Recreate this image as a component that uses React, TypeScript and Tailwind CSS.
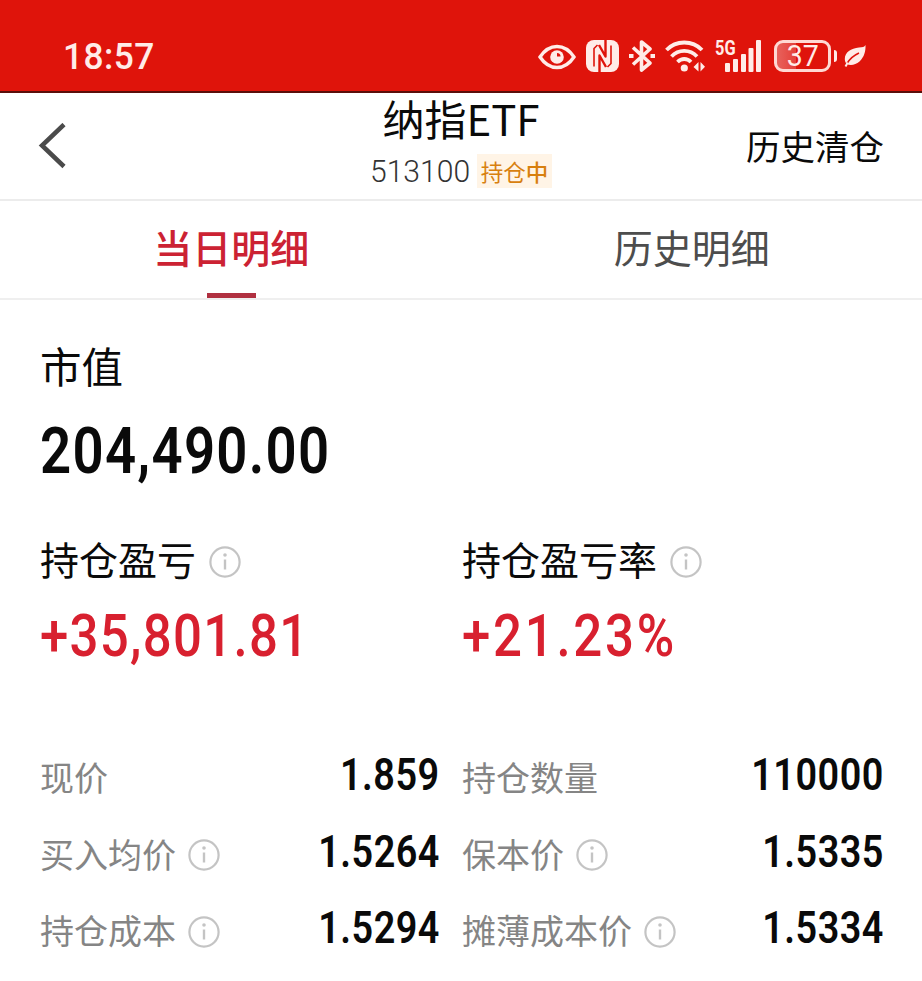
import { clsx } from 'clsx'

const summary = [
  { label: '持仓盈亏', value: '+35,801.81', tracking: 'tracking-[1.5px]' },
  { label: '持仓盈亏率', value: '+21.23%', tracking: 'tracking-[3.2px]' },
]

const details = [
  { label: '现价', value: '1.859', info: false },
  { label: '持仓数量', value: '110000', info: false },
  { label: '买入均价', value: '1.5264', info: true },
  { label: '保本价', value: '1.5335', info: true },
  { label: '持仓成本', value: '1.5294', info: true },
  { label: '摊薄成本价', value: '1.5334', info: true },
]

function InfoIcon() {
  return (
    <svg className="shrink-0 text-[#c4c4c4]" width="32" height="32" viewBox="0 0 32 32" fill="none" stroke="currentColor" strokeWidth="2.2">
      <circle cx="16" cy="16" r="14.6" />
      <path d="M16 13.5v10" strokeWidth="2.4" />
      <circle cx="16" cy="9" r="1.8" fill="currentColor" stroke="none" />
    </svg>
  )
}

function StatusIcons() {
  return (
    <div className="flex items-center text-[#ffece8]">
      <svg width="38" height="32" viewBox="0 0 38 32" fill="none">
        <path d="M2 17C7 9.500 12.500 6.500 19 6.500S31 9.500 36 17C31 24.500 25.500 27.500 19 27.500S7 24.500 2 17Z" stroke="currentColor" strokeWidth="3.400" />
        <circle cx="19" cy="17" r="6.800" fill="currentColor" />
        <path d="M19 16.500v-3.600a3.800 3.800 0 0 1 3.600 3.600Z" fill="#df140b" />
      </svg>
      <svg className="ml-[10px]" width="33" height="32" viewBox="0 0 33 32" fill="none">
        <rect width="33" height="32" rx="8" fill="currentColor" />
        <g stroke="#df140b" strokeLinejoin="round">
          <path d="M8 26.500V8.500L11.500 5M25 5.500v18L21.500 27" strokeWidth="1.600" />
          <path d="M13.500 32V15.500L20 27M19.500 0v16.500L13 5" strokeWidth="2.400" />
        </g>
      </svg>
      <svg className="ml-[10px]" width="26" height="32" viewBox="0 0 26 32" fill="none" stroke="currentColor" strokeWidth="3.600" strokeLinejoin="round">
        <path d="M4 7.500L21 23l-8.500 7V2L21 9 4 24.500" />
        <path d="M0 16h4.500M21.500 16H26" strokeWidth="4" />
      </svg>
      <svg className="ml-[10px]" width="40" height="32" viewBox="0 0 40 32" fill="none" stroke="currentColor" strokeWidth="3.800">
        <path d="M1.500 10c9.500-10 26-10 35.500 0" />
        <path d="M6.500 16.500c7-7.500 18.500-7.500 25.500 0" />
        <path d="M12.500 22c4-4 9.500-4 13.500 0" />
        <circle cx="19.300" cy="28" r="3.600" fill="currentColor" stroke="none" />
        <path d="M33.500 22v9.500L28.500 27zM35.500 31.500V22l4.500 4.700z" fill="currentColor" stroke="none" />
      </svg>
      <div className="relative ml-[10px] h-8 w-[47px]">
        <span className="absolute left-0 top-0 origin-left scale-x-[.78] font-['Roboto',sans-serif] text-[21px] font-bold leading-[17px]">5G</span>
        <svg width="47" height="32" viewBox="0 0 47 32" fill="currentColor">
          <rect x="10" y="23" width="5" height="9" rx="1" />
          <rect x="18" y="19" width="5" height="13" rx="1" />
          <rect x="26" y="14" width="5" height="18" rx="1" />
          <rect x="33.500" y="8" width="5" height="24" rx="1" />
          <rect x="41" width="5" height="32" rx="1" />
        </svg>
      </div>
      <div className="ml-[12px] flex items-center">
        <div className="flex h-8 w-[57px] items-center justify-center rounded-[9px] border-[3px] border-[#ffd9d3] bg-[linear-gradient(90deg,#e8625c_0%,#e4403a_37%,#df140b_37%)] font-['Roboto',sans-serif] text-[30px] leading-none">
          <span className="origin-center scale-x-[.95]">37</span>
        </div>
        <div className="ml-[3px] h-3 w-[3px] rounded-r-sm bg-[#ffece8]" />
      </div>
      <svg className="ml-[7px]" width="22" height="32" viewBox="0 0 22 32" fill="none">
        <path d="M21.500 5C20.500 7 18.500 7.200 15 7.500 7 8.500.8 12 .8 19c0 2 .7 3.500 1.700 4.800C6 26 11.500 25 15.500 21.500 20.300 17 21.800 11 21.500 5Z" fill="currentColor" />
        <path d="M3 23.500C6 18.500 9.500 15.500 15 13" stroke="#df140b" strokeWidth="1.500" />
        <path d="M1.500 26.500l2.200-4" stroke="currentColor" strokeWidth="2" />
      </svg>
    </div>
  )
}

export default function App() {
  return (
    <div className="h-[981px] w-[922px] overflow-hidden bg-white font-['Noto_Sans_CJK_SC',sans-serif] text-[#0a0a0a]">
      <div className="flex h-[93px] items-center justify-between border-b-2 border-[#5a0f0b] bg-[#df140b] pl-[63px] pr-[56px] pt-[21px]">
        <span className="origin-left scale-x-[.94] font-['Roboto',sans-serif] text-[37.500px] font-medium leading-8 tracking-[0.5px] text-[#ffece8]">18:57</span>
        <StatusIcons />
      </div>

      <header className="grid h-[108px] grid-cols-[1fr_auto_1fr] items-center border-b-2 border-[#ececec] px-[38px]">
        <svg width="30" height="46" viewBox="0 0 30 46" fill="none" stroke="#4b4b4b" strokeWidth="4.500">
          <path d="M26 1.500L4 22.500l22 21" />
        </svg>
        <div className="flex flex-col items-center pb-0.5">
          <h1 className="text-[42px] leading-[46px]">纳指ETF</h1>
          <div className="flex h-[54px] items-center pt-1.5">
            <span className="inline-block w-[107px] origin-left scale-x-[.94] font-['Roboto',sans-serif] text-[32px] font-light leading-[50px] text-[#333]">513100</span>
            <span className="bg-[#fff4e6] px-1 text-[22.500px] leading-[34px] text-[#d8800f]">
              持仓<span className="font-medium">中</span>
            </span>
          </div>
        </div>
        <span className="justify-self-end pb-0.5 text-[34.500px] leading-[50px]">历史清仓</span>
      </header>

      <nav className="grid h-[99px] grid-cols-2 border-b-2 border-[#efefef] pl-px text-[39px] leading-[90px]">
        <div className="flex flex-col items-center font-medium text-[#cc2233]">
          当日明细
          <div className="mt-0.5 h-[5px] w-[49px] shrink-0 bg-[#b03040]" />
        </div>
        <div className="text-center text-[#4d4d4d]">历史明细</div>
      </nav>

      <main className="pl-10 pr-[38px] pt-[39px]">
        <div className="text-[41.500px] leading-[52px]">市值</div>
        <div className="mt-[28px] origin-left scale-x-[.84] font-['Roboto',sans-serif] text-[65px] font-semibold leading-[64px] tracking-[1.500px]">204,490.00</div>

        <div className="mt-[49px] grid grid-cols-[422px_1fr]">
          {summary.map((item) => (
            <div key={item.label}>
              <div className="flex h-[52px] items-center gap-[13px] text-[39px] leading-[52px]">
                {item.label}
                <div className="pt-2">
                  <InfoIcon />
                </div>
              </div>
              <div className={clsx("mt-[20px] origin-left scale-x-[.85] font-['Roboto',sans-serif] text-[60px] font-medium leading-[64px] text-[#d8202f]", item.tracking)}>
                {item.value}
              </div>
            </div>
          ))}
        </div>

        <div className="mt-[69px] grid grid-cols-[400px_422px] gap-x-[22px]">
          {details.map((item) => (
            <div key={item.label} className="flex h-[76.500px] items-center justify-between">
              <div className={clsx('flex items-center pt-1 text-[34px] leading-[50px] text-[#858585]', item.info && 'gap-[12px]')}>
                {item.label}
                {item.info && (
                  <div className="pt-[3px]">
                    <InfoIcon />
                  </div>
                )}
              </div>
              <span className="origin-right scale-x-[.84] font-['Roboto',sans-serif] text-[45px] font-semibold leading-[50px] tracking-[0.6px]">{item.value}</span>
            </div>
          ))}
        </div>
      </main>
    </div>
  )
}
